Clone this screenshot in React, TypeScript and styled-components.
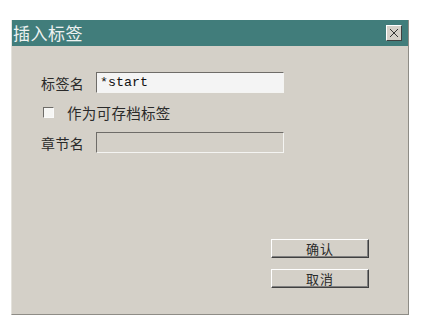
import React, { useState } from "react";
import styled, { createGlobalStyle } from "styled-components";

const GlobalStyle = createGlobalStyle`
  html, body {
    margin: 0;
    padding: 0;
    background: #ffffff;
  }
  body {
    font-family: "Noto Sans CJK SC", "DejaVu Sans", sans-serif;
  }
`;

const Page = styled.div`
  padding: 20px 0 0 11px;
`;

const Dialog = styled.div`
  width: 398px;
  height: 295px;
  box-sizing: border-box;
  background: #d4d0c8;
  border-right: 1px solid #8e8c86;
  border-bottom: 1px solid #8e8c86;
  border-left: 1px solid #e4e2dc;
  display: flex;
  flex-direction: column;
`;

const TitleBar = styled.div`
  height: 26px;
  background: #417d7b;
  display: flex;
  align-items: center;
  justify-content: space-between;
  padding: 0 6px 0 1px;
`;

const Title = styled.span`
  color: #eef2f1;
  font-size: 17px;
  line-height: 26px;
  letter-spacing: 0.5px;
`;

const CloseButton = styled.button`
  width: 16px;
  height: 16px;
  padding: 0;
  margin: 0;
  background: #d4d0c8;
  border: 1px solid;
  border-color: #ffffff #404040 #404040 #ffffff;
  display: flex;
  align-items: center;
  justify-content: center;
`;

const Body = styled.div`
  flex: 1;
  display: flex;
  flex-direction: column;
  justify-content: space-between;
  padding: 26px 39px 26px 29px;
`;

const Form = styled.div`
  display: grid;
  grid-template-columns: 55px 188px;
  grid-auto-rows: auto;
  row-gap: 0;
  align-items: center;
`;

const Label = styled.span`
  font-size: 14px;
  color: #2a2a2a;
  letter-spacing: 0.4px;
`;

const Field = styled.input<{ $disabled?: boolean }>`
  box-sizing: border-box;
  height: 21px;
  width: 188px;
  margin: 0;
  padding: 0 3px;
  border: 1px solid;
  border-color: #6e6c68 #f4f4f2 #f4f4f2 #6e6c68;
  background: ${(p) => (p.$disabled ? "#d4d0c8" : "#f4f4f4")};
  font-family: "Liberation Mono", monospace;
  font-size: 13.3px;
  color: #111;
  outline: none;
`;

const CheckRow = styled.label`
  grid-column: 1 / span 2;
  display: flex;
  align-items: center;
  height: 39px;
  padding-left: 2px;
`;

const CheckBox = styled.span`
  width: 11px;
  height: 11px;
  box-sizing: border-box;
  border: 1px solid;
  border-color: #6e6c68 #fafafa #fafafa #6e6c68;
  background: #f6f6f4;
  margin-right: 13px;
`;

const CheckText = styled.span`
  font-size: 14.5px;
  color: #2a2a2a;
  letter-spacing: 0.3px;
`;

const Buttons = styled.div`
  display: flex;
  flex-direction: column;
  align-items: flex-end;
  gap: 11px;
`;

const Button = styled.button`
  width: 98px;
  height: 19px;
  margin: 0;
  padding: 0;
  background: #d4d0c8;
  border: 1px solid;
  border-color: #ffffff #404040 #404040 #ffffff;
  box-shadow: inset -1px -1px 0 #808080;
  font-family: "Noto Sans CJK SC", sans-serif;
  font-size: 13px;
  line-height: 16px;
  color: #2a2a2a;
  letter-spacing: 1px;
`;

export default function App() {
  const [name, setName] = useState("*start");

  return (
    <>
      <GlobalStyle />
      <Page>
        <Dialog>
          <TitleBar>
            <Title>插入标签</Title>
            <CloseButton aria-label="关闭">
              <svg width="10" height="10" viewBox="0 0 10 10">
                <path d="M1 1 L9 9 M9 1 L1 9" stroke="#333" strokeWidth="1" fill="none" />
              </svg>
            </CloseButton>
          </TitleBar>
          <Body>
            <Form>
              <Label>标签名</Label>
              <Field value={name} onChange={(e) => setName(e.target.value)} />
              <CheckRow>
                <CheckBox />
                <CheckText>作为可存档标签</CheckText>
              </CheckRow>
              <Label>章节名</Label>
              <Field $disabled disabled defaultValue="" />
            </Form>
            <Buttons>
              <Button>确认</Button>
              <Button>取消</Button>
            </Buttons>
          </Body>
        </Dialog>
      </Page>
    </>
  );
}
